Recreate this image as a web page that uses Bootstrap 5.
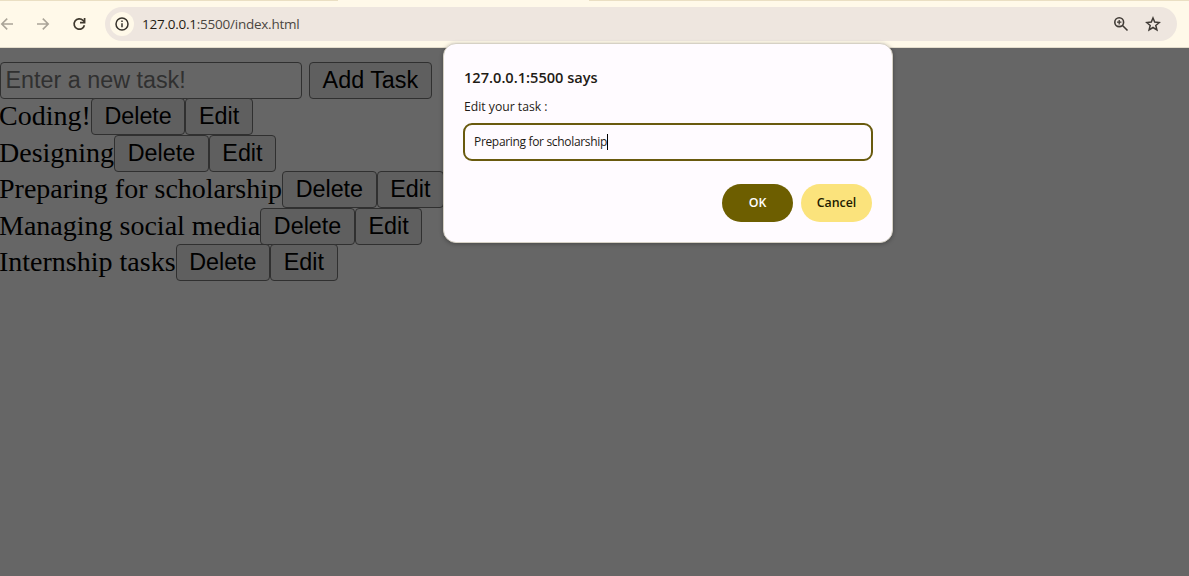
<!DOCTYPE html>
<html lang="en">
<head>
<meta charset="utf-8">
<meta name="viewport" content="width=device-width, initial-scale=1">
<title>Task list</title>
<link href="https://cdn.jsdelivr.net/npm/bootstrap@5.3.0/dist/css/bootstrap.min.css" rel="stylesheet">
<style>
  body { font-family: "Open Sans", "Noto Sans", sans-serif; background: #666; color: #000; }
  .toolbar { height: 48px; background: #fff9e9; border-bottom: 1px solid #e3dccb; padding: 7px 12px 6px 0; }
  .tab-edge { top: 0; height: 1px; background: #eadfc3; }
  .tab-left { left: 0; width: 338px; }
  .tab-right { left: 589px; right: 0; }
  .nav-icons { width: 105px; padding-left: 0; gap: 20px; }
  .nav-icons svg { margin-left: -1px; }
  .address { height: 34px; background: #eee6df; border-radius: 17px; padding: 0 16px 0 5px; }
  .site-info { width: 24px; height: 24px; background: #fff9e9; }
  .url { font-size: 13.5px; line-height: 20px; margin-left: 8px; color: #4b463f; letter-spacing: -.24px; }
  .url b { font-weight: 400; color: #1f1b13; }
  .page { height: 528px; padding-top: 14px; }
  .entry { height: 36.3px; }
  .task-input { width: 302px; height: 37px; padding: 0 0 0 4.5px; border: 1px solid #303030; border-radius: 4px; background: #666; color: #303030;
    font: 23.333px/33px "Liberation Sans", sans-serif; margin-right: 7px; }
  .task-input::placeholder { color: #303030; opacity: 1; }
  .task-btn { height: 37px; padding: 0 12.6px; border: 1px solid #303030; border-radius: 4px; background: #5f5f5f; color: #000;
    font: 23.333px/33px "Liberation Sans", sans-serif; white-space: nowrap; }
  .task { height: 36.45px; font: 28px/35px "Liberation Serif", serif; white-space: nowrap; margin-left: -1px; }
  .dialog-box { left: 443px; top: 43px; width: 450px; height: 200px; padding: 23px 20px 20px; background: #fffbff; border: 1px solid #d6d1c5;
    border-radius: 13px; box-shadow: 0 1px 4px rgba(0,0,0,.3); color: #1f1b16; }
  .dialog-title { font-size: 14.6px; line-height: 20px; font-weight: 600; }
  .dialog-label { font-size: 12.2px; line-height: 18px; margin-top: 11px; }
  .dialog-field { height: 38px; margin: 7px -1px 0; border: 2px solid #695a0e; border-radius: 9px; padding: 0 9px; font-size: 12px; letter-spacing: -.33px; }
  .caret { width: 1px; height: 16px; background: #000; }
  .dialog-actions { margin-top: 23px; gap: 8px; }
  .pill { width: 71px; height: 38px; padding: 0; border: 0; border-radius: 19px; font-size: 12.4px; font-weight: 600; }
  .pill-ok { background: #6d5e00; color: #fff; }
  .pill-cancel { background: #fbe37c; color: #221b00; }
</style>
</head>
<body class="overflow-hidden">
<header class="toolbar d-flex align-items-center position-relative">
  <span class="tab-edge tab-left position-absolute"></span>
  <span class="tab-edge tab-right position-absolute"></span>
  <nav class="nav-icons d-flex align-items-center flex-shrink-0">
    <svg width="17" height="16" viewBox="0 0 17 16" fill="none" stroke="#aaa498" stroke-width="1.6"><path d="M14 8H3M8.2 2.6 2.8 8l5.4 5.4"/></svg>
    <svg width="17" height="16" viewBox="0 0 17 16" fill="none" stroke="#aaa498" stroke-width="1.6"><path d="M2 8h11M7.8 2.6 13.2 8l-5.4 5.4"/></svg>
    <svg width="17" height="16" viewBox="0 0 17 16" fill="none" stroke="#403a2f" stroke-width="1.7"><path d="M13.4 9.2A5.2 5.2 0 1 1 12 4.3L13.5 6"/><path d="M13.6 2v4.7H9"/></svg>
  </nav>
  <div class="address d-flex align-items-center flex-grow-1">
    <span class="site-info rounded-circle d-flex align-items-center justify-content-center">
      <svg width="14" height="14" viewBox="0 0 14 14" fill="none" stroke="#36322b" stroke-width="1.5"><circle cx="7" cy="7" r="6"/><path d="M7 6.2v4M7 3.5v1.6"/></svg>
    </span>
    <span class="url"><b>127.0.0.1</b>:5500/index.html</span>
    <svg class="ms-auto me-3" width="16" height="16" viewBox="0 0 16 16" fill="none" stroke="#403b36" stroke-width="1.6"><circle cx="6.2" cy="6.2" r="4.4"/><path d="m9.5 9.5 5 5"/><path d="M6.2 4v4.4M4 6.2h4.4" stroke-width="1.3"/></svg>
    <svg width="16" height="16" viewBox="0 0 16 16" fill="none" stroke="#403b36" stroke-width="1.5"><path d="m8 2 1.7 4.1 4.6.4-3.5 3 1.1 4.4L8 11.5l-3.9 2.4 1.1-4.4-3.5-3 4.6-.4z"/></svg>
  </div>
</header>
<main class="page">
  <div class="entry d-flex">
    <input class="task-input" type="text" placeholder="Enter a new task!"><button class="task-btn">Add Task</button>
  </div>
  <div class="task d-flex"><span>Coding!</span><button class="task-btn">Delete</button><button class="task-btn">Edit</button></div>
  <div class="task d-flex"><span>Designing</span><button class="task-btn">Delete</button><button class="task-btn">Edit</button></div>
  <div class="task d-flex"><span>Preparing for scholarship</span><button class="task-btn">Delete</button><button class="task-btn">Edit</button></div>
  <div class="task d-flex"><span>Managing social media</span><button class="task-btn">Delete</button><button class="task-btn">Edit</button></div>
  <div class="task d-flex"><span>Internship tasks</span><button class="task-btn">Delete</button><button class="task-btn">Edit</button></div>
</main>
<section class="dialog-box position-absolute" role="dialog">
  <div class="dialog-title"><span>127.0.0.1:5500 says</span></div>
  <div class="dialog-label"><span>Edit your task :</span></div>
  <div class="dialog-field d-flex align-items-center"><span>Preparing for scholarship</span><span class="caret"></span></div>
  <div class="dialog-actions d-flex justify-content-end">
    <button class="pill pill-ok">OK</button><button class="pill pill-cancel">Cancel</button>
  </div>
</section>
<script src="https://cdn.jsdelivr.net/npm/bootstrap@5.3.0/dist/js/bootstrap.bundle.min.js"></script>
</body>
</html>
